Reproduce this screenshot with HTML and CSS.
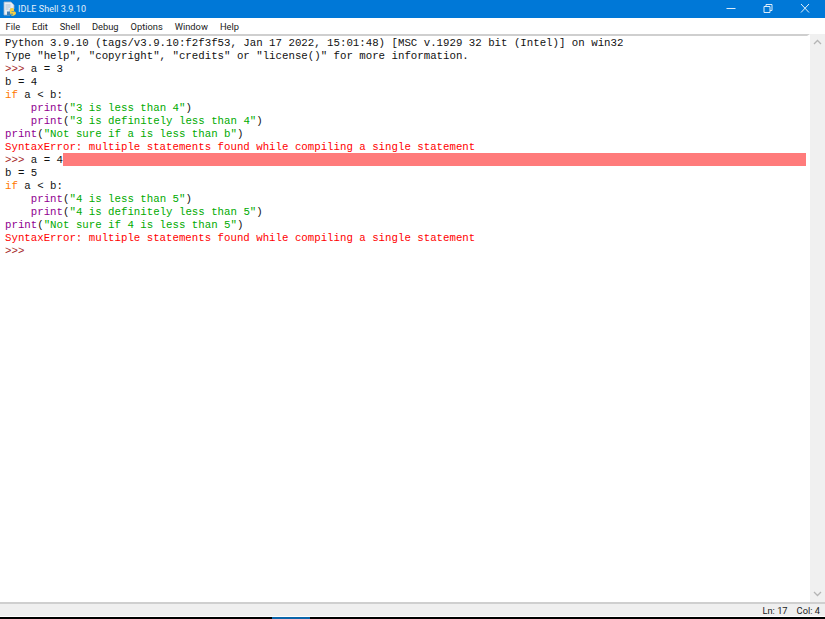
FILE: index.html
```html
<!DOCTYPE html>
<html lang="en">
<head>
<meta charset="utf-8">
<title>IDLE Shell 3.9.10</title>
<link rel="stylesheet" href="styles.css">
</head>
<body>
<div class="window">
  <header class="titlebar">
    <svg class="app-icon" width="16" height="16" viewBox="0 0 16 16">
      <path d="M2 1h7l3 3v4H8v6H2z" fill="#e8eef5" stroke="#9fb2c6" stroke-width=".8"/>
      <path d="M3.500 4h5M3.500 6h5M3.500 8h3" stroke="#9fb2c6" stroke-width=".8"/>
      <path d="M8 8.500c0-1 .8-1.500 2-1.500s2 .5 2 1.500V10H9.500v.5H12c1.300 0 2 .6 2 1.500s-.8 2-2 2.500c-1.500.6-3 0-3.300-1H11v-.7H8z" fill="#f5cf45"/>
      <path d="M5 10.500h3v3.500H5z" fill="#3f7fb5"/>
    </svg>
    <span class="title">IDLE Shell 3.9.10</span>
    <div class="controls">
      <svg class="ctl" width="36" height="18" viewBox="4.500 0 36 18"><path d="M18 8.500h9" stroke="#dcecfa" stroke-width="1"/></svg>
      <svg class="ctl" width="36" height="18" viewBox="4.500 0 36 18"><path d="M19.500 6.500h6v6h-6zM21.500 6.500v-2h6v6h-2" fill="none" stroke="#dcecfa" stroke-width="1"/></svg>
      <svg class="ctl" width="40" height="18" viewBox="2.500 0 40 18"><path d="M18.500 4l8 8.500M26.500 4l-8 8.500" fill="none" stroke="#e6f2fc" stroke-width="1"/></svg>
    </div>
  </header>
  <nav class="menubar">
    <span>File</span><span>Edit</span><span>Shell</span><span>Debug</span><span>Options</span><span>Window</span><span>Help</span>
  </nav>
  <main class="client">
    <div class="editor">
      <div class="line">Python 3.9.10 (tags/v3.9.10:f2f3f53, Jan 17 2022, 15:01:48) [MSC v.1929 32 bit (Intel)] on win32</div>
      <div class="line">Type "help", "copyright", "credits" or "license()" for more information.</div>
      <div class="line"><span class="prompt">&gt;&gt;&gt;</span> a = 3</div>
      <div class="line">b = 4</div>
      <div class="line"><span class="kw">if</span> a &lt; b:</div>
      <div class="line">    <span class="fn">print</span>(<span class="str">"3 is less than 4"</span>)</div>
      <div class="line">    <span class="fn">print</span>(<span class="str">"3 is definitely less than 4"</span>)</div>
      <div class="line"><span class="fn">print</span>(<span class="str">"Not sure if a is less than b"</span>)</div>
      <div class="line err">SyntaxError: multiple statements found while compiling a single statement</div>
      <div class="line errline"><span><span class="prompt">&gt;&gt;&gt;</span> a = 4</span><span class="mark"></span></div>
      <div class="line">b = 5</div>
      <div class="line"><span class="kw">if</span> a &lt; b:</div>
      <div class="line">    <span class="fn">print</span>(<span class="str">"4 is less than 5"</span>)</div>
      <div class="line">    <span class="fn">print</span>(<span class="str">"4 is definitely less than 5"</span>)</div>
      <div class="line"><span class="fn">print</span>(<span class="str">"Not sure if 4 is less than 5"</span>)</div>
      <div class="line err">SyntaxError: multiple statements found while compiling a single statement</div>
      <div class="line"><span class="prompt">&gt;&gt;&gt;</span></div>
    </div>
    <div class="scrollbar">
      <svg width="15" height="15" viewBox="0 0 15 15"><path d="M4 9l3.500-3.500L11 9" fill="none" stroke="#b5b5b5" stroke-width="1.300"/></svg>
      <svg width="15" height="15" viewBox="0 0 15 15"><path d="M4 6l3.500 3.500L11 6" fill="none" stroke="#b5b5b5" stroke-width="1.300"/></svg>
    </div>
  </main>
  <footer class="statusbar"><span>Ln: 17</span><span>Col: 4</span></footer>
  <div class="taskstrip"><span class="taskitem"></span></div>
</div>
</body>
</html>
```

FILE: styles.css
```css
* { box-sizing: border-box; }
html, body { margin: 0; padding: 0; }
body { width: 825px; height: 619px; overflow: hidden; font-family: "Open Sans", "Liberation Sans", sans-serif; }
.window { display: flex; flex-direction: column; height: 619px; background: #fff; }

.titlebar { display: flex; align-items: center; height: 18px; background: #0078d7; color: #e4f1fb; padding-left: 2px; flex: none; }
.app-icon { flex: none; }
.title { margin-left: 0; font: 9px/18px "Roboto", "Liberation Sans", sans-serif; letter-spacing: .05px; }
.controls { display: flex; margin-left: auto; }
.ctl { display: block; }

.menubar { display: flex; gap: 12px; height: 16px; align-items: center; padding: 1px 0 0 5.500px; font: 9.300px/15px "Roboto", "Liberation Sans", sans-serif; color: #222; background: #fff; flex: none; }

.client { display: flex; flex: 1; min-height: 0; }
.editor { flex: 1; padding: 1px 0 0 5px; background: #fff; border-top: 2px solid #cfcfcf; border-right: 3px solid #fff; font-family: "Liberation Mono", monospace; font-size: 10.740px; color: #111; }
.line { height: 13px; line-height: 13px; white-space: pre; }
.errline { display: flex; padding-right: 1px; }
.mark { flex: 1; margin: -1px 0 1px; background: #ff7b7b; }
.prompt { color: #a52a2a; }
.kw { color: #ff7700; }
.fn { color: #900090; }
.str { color: #00aa00; }
.err { color: #ff0000; }

.scrollbar { display: flex; flex-direction: column; justify-content: space-between; width: 15px; padding: 1px 0; background: #f0f0f0; flex: none; }
.scrollbar svg { display: block; }

.statusbar { display: flex; justify-content: flex-end; gap: 9px; height: 15px; padding-right: 5px; border-top: 2px solid #cfcfcf; border-bottom: 1px solid #fff; background: #efefef; color: #222; font: 9.300px/14px "Roboto", "Liberation Sans", sans-serif; flex: none; }

.taskstrip { height: 2px; background: #000; flex: none; }
.taskitem { display: block; width: 38px; height: 2px; margin-left: 272px; background: #0a64a8; }
```
